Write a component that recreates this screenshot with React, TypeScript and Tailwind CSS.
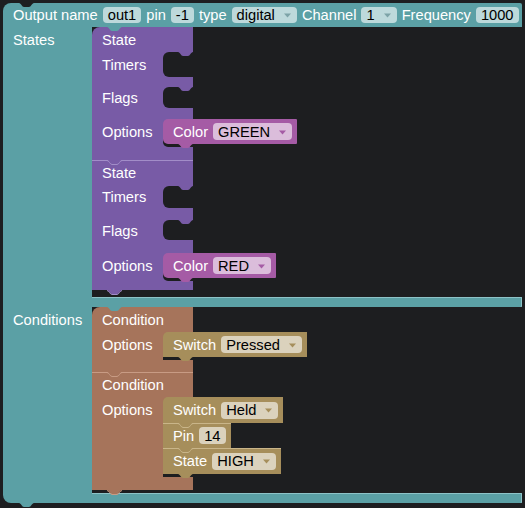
import React from "react";

function Tab({ fill, stroke, className }: { fill: string; stroke?: string; className: string }) {
  return (
    <svg width="15" height="5" viewBox="0 0 15 5" className={className}>
      <path d="M0 0 C2 0 3 4 5 4 L10 4 C12 4 13 0 15 0 Z" fill={fill} />
      {stroke && (
        <path d="M0 0.5 C2 0.5 3 4.5 5 4.5 L10 4.5 C12 4.5 13 0.5 15 0.5" fill="none" stroke={stroke} strokeWidth="1" />
      )}
    </svg>
  );
}

function Field({ children, arrow, h = "h-[17px]" }: { children: React.ReactNode; arrow?: string; h?: string }) {
  return (
    <span className={`inline-flex shrink-0 items-center gap-[8px] rounded-[4px] bg-white/60 px-[5px] pt-[1px] text-black ${h}`}>
      {children}
      {arrow && (
        <svg width="9" height="5" viewBox="0 0 9 5">
          <path d="M1 0.5 L8 0.5 L4.5 4.5 Z" fill={arrow} />
        </svg>
      )}
    </span>
  );
}

function Hole({ fill }: { fill: string }) {
  return (
    <div className="relative flex-1 rounded-l-[6px] bg-[#1d1e20]">
      <Tab fill={fill} className="absolute left-[15px] top-0" />
    </div>
  );
}

function ColorBlock({ value }: { value: string }) {
  return (
    <div className="relative flex h-[25px] shrink-0 items-center gap-[5px] rounded-l-[5px] rounded-r-[1px] bg-[#a55ba5] pl-[10px] pr-[5px] shadow-[0_3px_0_#1d1e20]">
      <span className="pt-[1px]">Color</span>
      <Field arrow="#a55ba5">{value}</Field>
      <Tab fill="#a55ba5" className="absolute left-[15px] top-full" />
    </div>
  );
}

function StateBlock({ sep, rows, value }: { sep?: boolean; rows: string[]; value: string }) {
  const purple = "#785ba6";
  return (
    <div
      className={`relative w-[101px] bg-[#785ba6] ${sep ? "shadow-[inset_0_1px_0_#a28dc8]" : "rounded-tl-[8px]"}`}
    >
      <div className={`flex items-center pl-[10px] pt-[1px] ${rows[0]}`}>State</div>
      <div className={`flex ${rows[1]}`}>
        <div className="flex w-[71px] items-center pl-[10px] pt-[1px]">Timers</div>
        <Hole fill={purple} />
      </div>
      <div className={rows[2]} />
      <div className={`flex ${rows[3]}`}>
        <div className="flex w-[71px] items-center pl-[10px] pt-[2px]">Flags</div>
        <Hole fill={purple} />
      </div>
      <div className={rows[4]} />
      <div className="flex h-[25px] items-center">
        <div className="w-[71px] shrink-0 pl-[10px] pt-[1px]">Options</div>
        <ColorBlock value={value} />
      </div>
      <div className={rows[5]} />
      <Tab fill={purple} stroke="#a28dc8" className="absolute left-[15px] top-full z-10" />
    </div>
  );
}

function Stat({ label, children, last, first }: { label: string; children: React.ReactNode; last?: boolean; first?: boolean }) {
  return (
    <div
      className={`relative flex w-fit items-center gap-[5px] bg-[#a68e5b] pl-[10px] pr-[5px] ${first ? "h-[26px] rounded-tl-[5px]" : last ? "h-[26px] shadow-[inset_0_1px_0_#c9b589,0_3px_0_#1d1e20]" : "h-[25px] shadow-[inset_0_1px_0_#c9b589]"}`}
    >
      <span className="pt-[1px]">{label}</span>
      {children}
      <Tab fill="#a68e5b" stroke={last ? undefined : "#c9b589"} className="absolute left-[15px] top-full z-10" />
    </div>
  );
}

function ConditionBlock({ sep, children, pad }: { sep?: boolean; children: React.ReactNode; pad: string }) {
  return (
    <div className={`relative w-[101px] bg-[#a6745b] ${sep ? "shadow-[inset_0_1px_0_#c89b84]" : "rounded-tl-[8px]"}`}>
      <div className="flex h-[25px] items-center pl-[10px] pt-[1px]">Condition</div>
      <div className="flex items-start">
        <div className="flex h-[25px] w-[71px] shrink-0 items-center pl-[10px] pt-[1px]">Options</div>
        <div className="shrink-0">{children}</div>
      </div>
      <div className={pad} />
      <Tab fill="#a6745b" stroke="#c89b84" className="absolute left-[15px] top-full z-10" />
    </div>
  );
}

function Arm({ last }: { last?: boolean }) {
  return (
    <div className="flex h-[10px]">
      <div className={`w-[89px] bg-[#5ba0a5] ${last ? "rounded-bl-[8px]" : ""}`} />
      <div className="flex-1 rounded-r-[1px] bg-[#5ba0a5] shadow-[inset_0_1px_0_#8dc3c7,inset_-1px_0_0_#8dc3c7]" />
    </div>
  );
}

export default function App() {
  const teal = "#5ba0a5";
  return (
    <div className="h-[508px] w-[525px] overflow-hidden bg-[#1d1e20] pl-[3px] pt-[3px] font-['Liberation_Sans',Arial,sans-serif] text-[14.67px] leading-none text-white">
      <div className="relative w-[519px]">
        <div className="flex h-[24px] items-center gap-[5px] rounded-tl-[8px] rounded-tr-[2px] bg-[#5ba0a5] pl-[10px]">
          <span className="pt-[1px]">Output name</span>
          <Field h="h-[16px]">out1</Field>
          <span className="pt-[1px]">pin</span>
          <Field h="h-[16px]">-1</Field>
          <span className="pt-[1px]">type</span>
          <Field h="h-[16px]" arrow="#7da3a7">digital</Field>
          <span className="pt-[1px]">Channel</span>
          <Field h="h-[16px]" arrow="#7da3a7">1</Field>
          <span className="pt-[1px]">Frequency</span>
          <Field h="h-[16px]">1000</Field>
        </div>
        <Tab fill="#1d1e20" className="absolute left-[16px] top-0" />

        <div className="flex">
          <div className="w-[89px] shrink-0 bg-[#5ba0a5] pl-[10px]">
            <div className="flex h-[25px] items-center pt-[1px]">States</div>
          </div>
          <div className="relative pb-[7px]">
            <StateBlock rows={["h-[25px]", "h-[25px]", "h-[10px]", "h-[21px]", "h-[11px]", "h-[16px]"]} value="GREEN" />
            <StateBlock sep rows={["h-[26px]", "h-[22px]", "h-[12px]", "h-[20px]", "h-[13px]", "h-[12px]"]} value="RED" />
            <Tab fill={teal} className="absolute left-[15px] top-0 z-20" />
          </div>
        </div>
        <Arm />

        <div className="flex">
          <div className="w-[89px] shrink-0 bg-[#5ba0a5] pl-[10px]">
            <div className="flex h-[25px] items-center pt-[1px]">Conditions</div>
          </div>
          <div className="relative pb-[3px]">
            <ConditionBlock pad="h-[15px]">
              <div className="relative flex h-[25px] w-fit items-center gap-[5px] rounded-tl-[5px] bg-[#a68e5b] pl-[10px] pr-[5px] shadow-[0_3px_0_#1d1e20]">
                <span className="pt-[1px]">Switch</span>
                <Field arrow="#a68e5b">Pressed</Field>
                <Tab fill="#a68e5b" className="absolute left-[15px] top-full z-10" />
              </div>
            </ConditionBlock>
            <ConditionBlock sep pad="h-[16px]">
              <Stat first label="Switch">
                <Field arrow="#a68e5b">Held</Field>
              </Stat>
              <Stat label="Pin">
                <Field>14</Field>
              </Stat>
              <Stat last label="State">
                <Field arrow="#a68e5b">HIGH</Field>
              </Stat>
            </ConditionBlock>
            <Tab fill={teal} className="absolute left-[15px] top-0 z-20" />
          </div>
        </div>
        <Arm last />
        <Tab fill={teal} className="absolute left-[16px] top-full" />
      </div>
    </div>
  );
}
